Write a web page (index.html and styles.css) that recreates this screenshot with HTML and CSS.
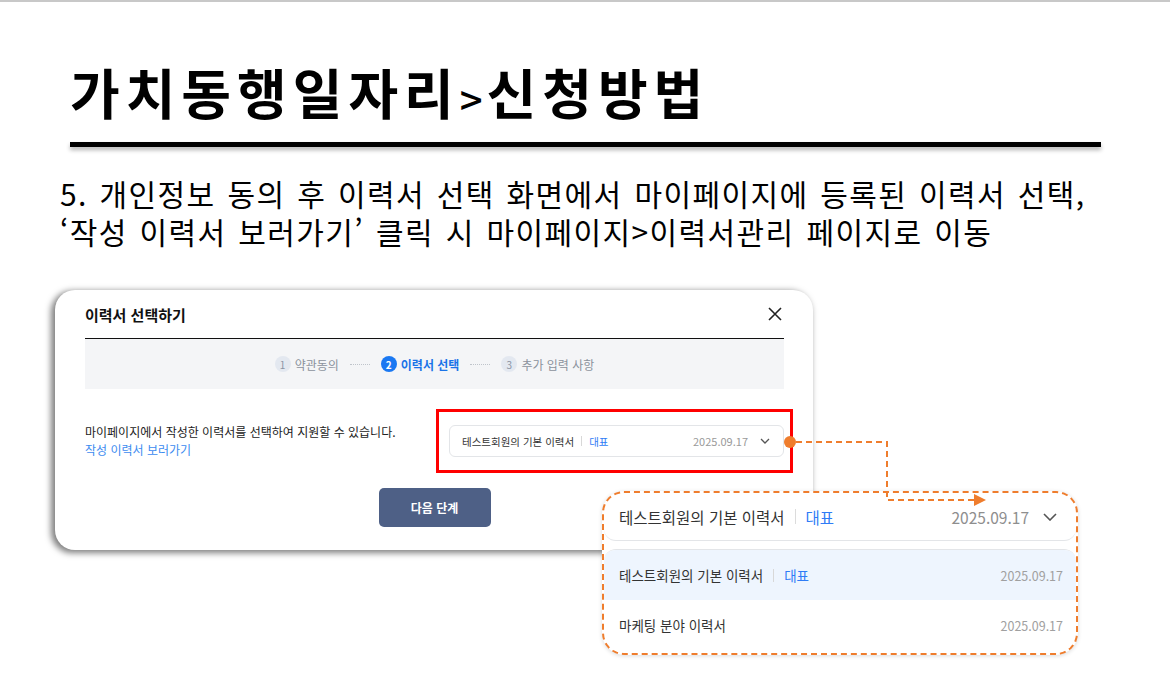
FILE: index.html
```html
<!DOCTYPE html>
<html lang="ko">
<head>
<meta charset="utf-8">
<link rel="stylesheet" href="styles.css">
</head>
<body>
<div class="page">
  <header class="head">
    <h1 class="title">가치동행일자리<span class="gt">&gt;</span>신청방법</h1>
    <div class="rule"></div>
  </header>
  <p class="desc"><span class="line">5. 개인정보 동의 후 이력서 선택 화면에서 마이페이지에 등록된 이력서 선택,</span><span class="line">‘작성 이력서 보러가기’ 클릭 시 마이페이지&gt;이력서관리 페이지로 이동</span></p>

  <div class="figure">
    <div class="modal">
      <div class="modal-head">
        <span class="modal-title">이력서 선택하기</span>
        <svg class="close" width="14" height="14" viewBox="0 0 14 14"><path d="M1 1L13 13M13 1L1 13" stroke="#222" stroke-width="1.6" fill="none"/></svg>
      </div>
      <div class="steps">
        <div class="step"><span class="num">1</span><span>약관동의</span></div>
        <span class="dash"></span>
        <div class="step active"><span class="num">2</span><span>이력서 선택</span></div>
        <span class="dash"></span>
        <div class="step"><span class="num">3</span><span>추가 입력 사항</span></div>
      </div>
      <div class="modal-body">
        <div class="info">
          <p class="info-text">마이페이지에서 작성한 이력서를 선택하여 지원할 수 있습니다.</p>
          <a class="info-link">작성 이력서 보러가기</a>
        </div>
        <div class="select">
          <span class="sel-name">테스트회원의 기본 이력서</span>
          <span class="sep"></span>
          <span class="tag">대표</span>
          <span class="sel-date">2025.09.17</span>
          <svg class="chev" width="10" height="6" viewBox="0 0 10 6"><path d="M1 1L5 5L9 1" stroke="#555" stroke-width="1.3" fill="none"/></svg>
        </div>
      </div>
      <div class="actions"><button class="next">다음 단계</button></div>
    </div>

    <div class="callout">
      <div class="call-head">
        <span class="ch-name">테스트회원의 기본 이력서</span>
        <span class="ch-sep"></span>
        <span class="ch-tag">대표</span>
        <span class="ch-date">2025.09.17</span>
        <svg class="ch-chev" width="14" height="8" viewBox="0 0 14 8"><path d="M1 1L7 7L13 1" stroke="#555" stroke-width="1.6" fill="none"/></svg>
      </div>
      <div class="list">
        <div class="row selected">
          <span class="r-name">테스트회원의 기본 이력서</span>
          <span class="r-sep"></span>
          <span class="r-tag">대표</span>
          <span class="r-date">2025.09.17</span>
        </div>
        <div class="row">
          <span class="r-name">마케팅 분야 이력서</span>
          <span class="r-date">2025.09.17</span>
        </div>
      </div>
    </div>

    <svg class="connector" width="1170" height="385" viewBox="0 0 1170 385">
      <path d="M796 152H887V210H975" stroke="#ef7d2d" stroke-width="2" fill="none" stroke-dasharray="6 4"/>
      <polygon points="974,204 986,210 974,216" fill="#ef7d2d"/>
      <circle cx="790" cy="152" r="6" fill="#ef7d2d"/>
    </svg>
  </div>
</div>
</body>
</html>
```

FILE: styles.css
```css
* { box-sizing: border-box; }
html, body { margin: 0; padding: 0; background: #fff; }
body {
  font-family: "Noto Sans CJK KR", "Noto Sans", sans-serif;
  color: #000;
  width: 1170px;
  height: 675px;
  overflow: hidden;
}
.page {
  border-top: 2px solid #c8c8c8;
}
.head {
  padding-top: 58px;
  padding-left: 70px;
}
.title {
  margin: 0;
  height: 64px;
  font-size: 54px;
  font-weight: 700;
  line-height: 64px;
  letter-spacing: 6px;
  color: #000;
}
.gt {
  font-size: 40px;
  font-weight: 500;
  line-height: 1;
  letter-spacing: 4px;
}
.rule {
  margin-top: 18px;
  width: 1031px;
  height: 5px;
  background: #000;
  box-shadow: 0 3px 4px rgba(0, 0, 0, 0.3);
}
.desc {
  margin: 27px 0 0 60px;
  font-size: 30px;
  color: #000;
  letter-spacing: 1.4px;
  word-spacing: 2px;
  display: flex;
  flex-direction: column;
}
.line {
  display: block;
  height: 38px;
  line-height: 38px;
  white-space: nowrap;
}
.figure {
  position: relative;
  margin-top: 40px;
  height: 385px;
}
.modal {
  margin-left: 55px;
  width: 758px;
  height: 260px;
  background: #fff;
  border-radius: 20px;
  box-shadow: -3px 2px 6px 1px rgba(0, 0, 0, 0.5);
  padding: 0 29px 0 30px;
  display: flex;
  flex-direction: column;
}
.modal-head {
  height: 49px;
  display: flex;
  align-items: center;
  justify-content: space-between;
  border-bottom: 1.5px solid #111;
}
.modal-title {
  font-size: 15px;
  font-weight: 700;
  color: #111;
}
.close { margin-right: 2px; }
.steps {
  height: 50px;
  background: #f4f5f7;
  display: flex;
  align-items: center;
  justify-content: center;
  font-size: 12px;
  color: #8b929c;
}
.step {
  display: flex;
  align-items: center;
  gap: 4px;
}
.num {
  width: 16px;
  height: 16px;
  border-radius: 50%;
  background: #e3e8f0;
  color: #8b94a4;
  font-size: 10px;
  display: flex;
  align-items: center;
  justify-content: center;
}
.step.active { color: #1a73e8; font-weight: 700; }
.step.active .num { background: #1a78f2; color: #fff; }
.dash {
  width: 20px;
  border-top: 1px dotted #bfc4cb;
  margin: 0 11px;
}
.modal-body {
  display: flex;
  justify-content: space-between;
  align-items: flex-start;
  padding-top: 34px;
}
.info-text {
  margin: 0;
  font-size: 12px;
  line-height: 18px;
  color: #222;
}
.info-link {
  display: block;
  font-size: 12px;
  line-height: 18px;
  color: #3d8cf0;
}
.select {
  position: relative;
  margin-top: 2px;
  width: 335px;
  height: 32px;
  border: 1px solid #e3e5e8;
  border-radius: 6px;
  display: flex;
  align-items: center;
  padding: 0 13px 0 12px;
  font-size: 10.5px;
}
.select::after {
  content: "";
  position: absolute;
  top: -17px;
  left: -14px;
  right: -10px;
  bottom: -17px;
  border: 3px solid #ff0000;
}
.sel-name { color: #333; }
.sep {
  width: 1px;
  height: 10px;
  background: #d8d8d8;
  margin: 0 7px;
}
.tag { color: #2f7cf6; }
.sel-date {
  margin-left: auto;
  font-size: 11px;
  color: #9a9a9a;
  margin-right: 12px;
}
.actions {
  display: flex;
  justify-content: center;
  margin-top: 29px;
}
.next {
  width: 112px;
  height: 39px;
  border: none;
  border-radius: 5px;
  background: #4e6086;
  color: #fff;
  font-family: inherit;
  font-size: 12px;
  font-weight: 700;
}
.callout {
  position: absolute;
  left: 602px;
  top: 201px;
  width: 476px;
  height: 164px;
  border: 2px dashed #ef7d2d;
  border-radius: 22px;
  background: #fff;
  overflow: hidden;
  box-shadow: 0 1px 4px rgba(0, 0, 0, 0.15);
}
.call-head {
  height: 48px;
  display: flex;
  align-items: center;
  padding: 0 19px 0 15px;
  border-bottom: 1px solid #e3e5e8;
  border-radius: 0 0 12px 12px;
  font-size: 15.5px;
}
.ch-name { color: #333; }
.ch-sep {
  width: 1px;
  height: 15px;
  background: #dcdcdc;
  margin: 0 10px;
}
.ch-tag { color: #2f7cf6; }
.ch-date {
  margin-left: auto;
  font-size: 15.5px;
  color: #8e8e8e;
  margin-right: 14px;
}
.list {
  margin-top: 8px;
  border-top: 1px solid #e3e5e8;
  border-radius: 12px 12px 0 0;
  overflow: hidden;
}
.row {
  height: 50px;
  display: flex;
  align-items: center;
  padding: 0 13px 0 15px;
  font-size: 13.5px;
}
.row.selected { background: #eef5fe; }
.r-name { color: #333; }
.r-sep {
  width: 1px;
  height: 13px;
  background: #d8d8d8;
  margin: 0 10px;
}
.r-tag { color: #2f7cf6; }
.r-date {
  margin-left: auto;
  font-size: 12.5px;
  color: #a0a0a0;
}
.connector {
  position: absolute;
  left: 0;
  top: 0;
  pointer-events: none;
}
```
